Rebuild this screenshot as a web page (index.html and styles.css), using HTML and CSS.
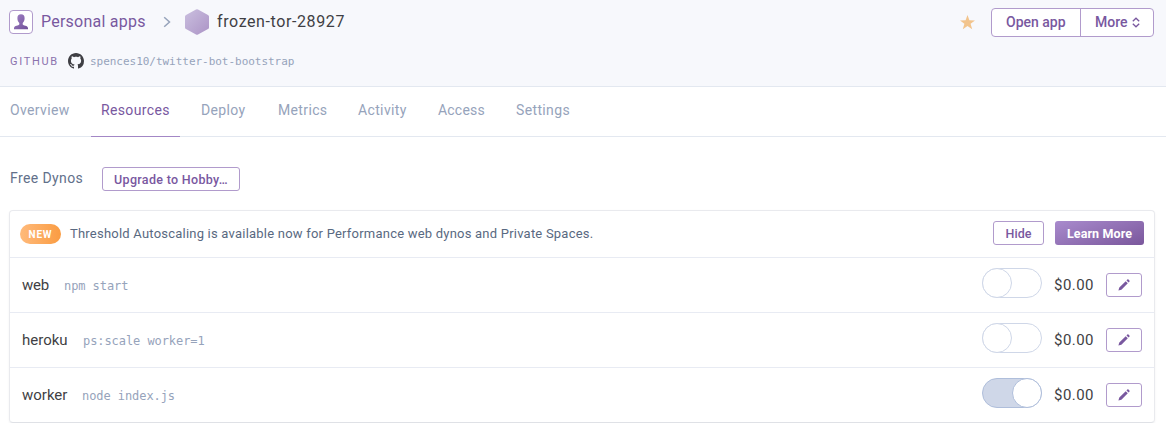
FILE: index.html
```html
<!DOCTYPE html>
<html lang="en">
<head>
<meta charset="utf-8">
<title>frozen-tor-28927 · Resources</title>
<link rel="stylesheet" href="styles.css">
</head>
<body>
<svg class="defs" width="0" height="0">
  <defs>
    <linearGradient id="purple" x1="0" y1="0" x2="1" y2="1"><stop offset="0" stop-color="#a182c5"/><stop offset="1" stop-color="#6f4f98"/></linearGradient>
    <linearGradient id="lilac" x1="0" y1="0" x2="1" y2="1"><stop offset="0" stop-color="#cabfdf"/><stop offset="1" stop-color="#ac94c6"/></linearGradient>
    <symbol id="pencil" viewBox="0 0 12 12"><path d="M.4 11.6l.9-3L7.7 2.2l2.1 2.1-6.400 6.400zM8.500 1.400l.8-.8q.6-.5 1.200 0l.9.9q.5.6 0 1.200l-.8.8z" fill="#79589f"/></symbol>
  </defs>
</svg>
<header class="header">
  <div class="crumbs">
    <span class="avatar"><svg width="14" height="16" viewBox="0 0 14 16"><path d="M7 .3C4.600.3 3.300 1.900 3.400 4.200c0 2 .7 3.700 1.900 4.700v1.700c-.4 1.100-5.200.9-5.300 3.600V15.300h14v-1.100c-.1-2.700-4.900-2.500-5.300-3.600V8.900c1.200-1 1.900-2.700 1.900-4.700C10.700 1.900 9.400.3 7 .3z" fill="url(#purple)"/></svg></span>
    <a class="owner">Personal apps</a>
    <svg class="chevron" width="8" height="12" viewBox="0 0 8 12"><path d="M1.200 1.200L6.500 6l-5.300 4.800" fill="none" stroke="#96a3bb" stroke-width="1.500"/></svg>
    <svg class="hex" width="24" height="26" viewBox="0 0 24 26"><path d="M11 .6q1-.5 2 0l10 5.300q1 .5 1 1.600v11q0 1.100-1 1.600l-10 5.300q-1 .5-2 0l-10-5.300q-1-.5-1-1.600v-11q0-1.100 1-1.600z" fill="url(#lilac)"/></svg>
    <span class="app-name">frozen-tor-28927</span>
    <svg class="star" width="15" height="15" viewBox="0 0 15 15"><path d="M7.500 0l1.900 5.200 5.600.2-4.400 3.400 1.600 5.400-4.700-3.100-4.700 3.100 1.600-5.400L0 5.400l5.600-.2z" fill="#f2c48d"/></svg>
    <div class="actions">
      <a class="open"><span class="t-open">Open app</span></a>
      <a class="more"><span class="t-more">More</span><svg width="8" height="11" viewBox="0 0 8 11"><path d="M.8 4.200L4 1.200l3.200 3M.8 6.800L4 9.800l3.200-3" fill="none" stroke="#79589f" stroke-width="1.300"/></svg></a>
    </div>
  </div>
  <div class="repo">
    <span class="repo-label">GITHUB</span>
    <svg width="16" height="16" viewBox="0 0 16 16"><path fill="#3f3f44" d="M8 0C3.580 0 0 3.580 0 8c0 3.540 2.290 6.530 5.470 7.590.4.07.55-.17.55-.38 0-.19-.01-.82-.01-1.490-2.010.37-2.530-.49-2.690-.94-.09-.23-.48-.94-.82-1.130-.28-.15-.68-.52-.01-.53.63-.01 1.080.58 1.230.82.72 1.210 1.870.87 2.330.66.07-.52.28-.87.51-1.070-1.780-.2-3.640-.89-3.640-3.950 0-.87.31-1.590.82-2.150-.08-.2-.36-1.020.08-2.120 0 0 .67-.21 2.200.82.64-.18 1.320-.27 2-.27s1.360.09 2 .27c1.530-1.040 2.200-.82 2.200-.82.44 1.100.16 1.920.08 2.120.51.56.82 1.270.82 2.150 0 3.070-1.870 3.750-3.650 3.950.29.25.54.73.54 1.480 0 1.070-.01 1.930-.01 2.200 0 .21.15.46.55.38A8.010 8.010 0 0 0 16 8c0-4.420-3.580-8-8-8z"/></svg>
    <span class="repo-name">spences10/twitter-bot-bootstrap</span>
  </div>
</header>
<nav class="tabs">
  <a class="tab t1">Overview</a><a class="tab t2 active">Resources</a><a class="tab t3">Deploy</a><a class="tab t4">Metrics</a><a class="tab t5">Activity</a><a class="tab t6">Access</a><a class="tab t7">Settings</a>
</nav>
<main class="main">
  <div class="plan"><span class="plan-name">Free Dynos</span><a class="btn upgrade"><span>Upgrade to Hobby…</span></a></div>
  <section class="panel">
    <div class="notice">
      <span class="badge"><span>NEW</span></span>
      <span class="message">Threshold Autoscaling is available now for Performance web dynos and Private Spaces.</span>
      <a class="btn hide"><span>Hide</span></a><a class="btn learn"><span>Learn More</span></a>
    </div>
    <div class="row"><span class="proc p-web">web</span><code>npm start</code><span class="toggle"><i></i></span><span class="price">$0.00</span><a class="btn edit"><svg width="12" height="12"><use href="#pencil"/></svg></a></div>
    <div class="row"><span class="proc p-heroku">heroku</span><code>ps:scale worker=1</code><span class="toggle"><i></i></span><span class="price">$0.00</span><a class="btn edit"><svg width="12" height="12"><use href="#pencil"/></svg></a></div>
    <div class="row"><span class="proc p-worker">worker</span><code>node index.js</code><span class="toggle on"><i></i></span><span class="price">$0.00</span><a class="btn edit"><svg width="12" height="12"><use href="#pencil"/></svg></a></div>
  </section>
</main>
</body>
</html>
```
FILE: styles.css
```css
* { box-sizing: border-box; }
body { margin: 0; background: #fff; font-family: Roboto, "Liberation Sans", sans-serif; color: #3f3f44; white-space: nowrap; }
svg { display: block; flex: none; }
.defs { position: absolute; }
.header { height: 87px; background: #f7f8fc; border-bottom: 1px solid #e3e8f0; }
.crumbs { display: flex; align-items: center; height: 37px; padding: 8px 12px 0 9px; }
.avatar { width: 24px; height: 24px; margin-top: -1px; border: 1px solid #b19bcc; border-radius: 4px; background: #fff; display: flex; align-items: center; justify-content: center; }
.owner { width: 105px; margin-left: 8px; margin-top: -2px; font-size: 16px; letter-spacing: .24px; color: #79589f; }
.chevron { margin-left: 17px; margin-right: 1px; margin-top: -2px; }
.hex { margin-left: 13px; margin-top: -1px; }
.app-name { margin-left: 8px; margin-top: -2px; font-size: 16px; letter-spacing: .6px; }
.star { margin-left: auto; margin-right: 16px; }
.actions { display: flex; width: 163px; height: 29px; border: 1px solid #b19bcc; border-radius: 4px; background: #fff; font-size: 14px; font-weight: 500; color: #79589f; }
.actions a { display: flex; align-items: center; height: 26px; }
.actions .open { width: 89px; height: 27px; padding-left: 14px; padding-bottom: 1px; border-right: 1px solid #b19bcc; }
.more { padding-left: 14px; gap: 5px; }
.t-more { width: 32px; }
.repo { display: flex; align-items: center; height: 16px; margin-top: 16px; padding-left: 10px; }
.repo-label { width: 58px; font-size: 11px; letter-spacing: 1.700px; color: #8b72ad; }
.repo-name { margin-left: 6px; font: 11px "DejaVu Sans Mono", monospace; letter-spacing: -.03px; color: #96a3bb; }
.tabs { display: flex; height: 50px; border-bottom: 1px solid #e3e8f0; }
.tab { height: 50px; padding: 0 10px; line-height: 46px; font-size: 14px; letter-spacing: .36px; color: #96a3bb; margin-right: 11px; }
.tab.active { color: #79589f; border-bottom: 1px solid #a387c6; }
.t1 { width: 80px; } .t2 { width: 89px; } .t3 { width: 66px; } .t4 { width: 69px; }
.t5 { width: 69px; } .t6 { width: 67px; letter-spacing: .2px; } .t7 { width: 75px; }
.main { padding: 30px 11px 0 9px; }
.plan { display: flex; height: 24px; align-items: center; }
.plan-name { width: 93px; padding-left: 1px; margin-top: -2px; font-size: 14px; letter-spacing: .4px; color: #62708a; }
.btn { display: flex; align-items: center; justify-content: center; height: 24px; border: 1px solid #b19bcc; border-radius: 3px; color: #79589f; font-size: 12.5px; font-weight: 500; }
.upgrade { width: 138px; letter-spacing: .32px; }
.panel { width: 1146px; height: 213px; margin-top: 19px; border: 1px solid #e9eaee; border-bottom-color: #dfe1e6; border-radius: 4px; box-shadow: 0 1px 2px rgba(60,60,80,.08); }
.notice { display: flex; align-items: center; height: 47px; padding: 0 10px 2px; border-bottom: 1px solid #e8ebf3; }
.badge { width: 41px; height: 20px; margin-top: 2px; border-radius: 10px; background: linear-gradient(90deg, #ffba7b, #fa9c42); color: #fff; font-size: 10px; font-weight: 700; letter-spacing: .8px; display: flex; align-items: center; justify-content: center; }
.message { margin-left: 9px; font-size: 13px; letter-spacing: .218px; color: #596981; }
.hide { width: 51px; margin-left: auto; }
.learn { width: 89px; margin-left: 11px; border: 0; color: #fff; background: linear-gradient(160deg, #a98bcd, #7a579c); font-weight: 700; letter-spacing: .1px; }
.row { display: flex; align-items: center; height: 55px; padding: 0 12px; border-bottom: 1px solid #e8ebf3; }
.row:last-child { border-color: transparent; }
.proc { font-size: 15px; }
.p-web { width: 27px; letter-spacing: -.2px; } .p-heroku { width: 46px; } .p-worker { width: 45px; }
.row code { margin: 1px 0 0 15px; font: 12px "DejaVu Sans Mono", monospace; letter-spacing: -.07px; color: #96a3bb; }
.toggle { width: 60px; height: 30px; margin: -4px 0 0 auto; border: 1px solid #cfd7e8; border-radius: 15px; display: flex; }
.toggle i { width: 30px; height: 30px; margin: -1px; border: 1px solid #cfd7e8; border-radius: 50%; background: #fff; }
.toggle.on { background: #cfd7e8; border-color: #afbedb; justify-content: flex-end; }
.toggle.on i { border-color: #afbedb; }
.price { width: 52px; padding-left: 12px; font-size: 15px; letter-spacing: .45px; }
.edit { width: 36px; margin-left: 12px; }
```
